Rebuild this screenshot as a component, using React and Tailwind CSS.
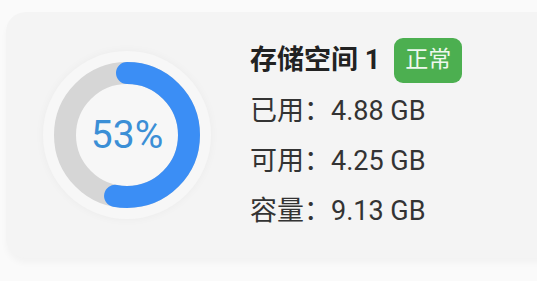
import React from "react";

const Ring = ({ percent }) => {
    const r = 62;
    const c = 2 * Math.PI * r;
    return (
        <div className="w-[168px] h-[168px] rounded-full bg-[#f7f7f7] shadow-[0_0_10px_rgba(0,0,0,0.04)] flex items-center justify-center relative">
            <svg width="168" height="168" viewBox="0 0 168 168" className="absolute inset-0">
                <circle cx="84" cy="84" r={r} fill="none" stroke="#d6d6d6" strokeWidth="22" />
                <circle
                    cx="84"
                    cy="84"
                    r={r}
                    fill="none"
                    stroke="#3b8ef5"
                    strokeWidth="22"
                    strokeLinecap="round"
                    strokeDasharray={`${(c * percent) / 100} ${c}`}
                    transform="rotate(-90 84 84)"
                />
            </svg>
            <span className="relative text-[39px] text-[#3b8fd6] font-[Roboto,sans-serif] leading-none">{percent}%</span>
        </div>
    );
};

const rows = [
    { label: "已用", value: "4.88 GB" },
    { label: "可用", value: "4.25 GB" },
    { label: "容量", value: "9.13 GB" },
];

const App = () => {
    return (
        <div className="w-[537px] h-[281px] bg-[#fafafa] overflow-hidden pt-[12px] pl-[6px] font-[Roboto,'Noto_Sans_CJK_SC',sans-serif]">
            <div className="w-[580px] h-[246px] bg-[#f4f4f4] rounded-[20px] shadow-[0_5px_6px_rgba(0,0,0,0.03)] flex items-center pl-[37px]">
                <Ring percent={53} />
                <div className="ml-[39px] flex flex-col">
                    <div className="h-[52px] flex items-center">
                        <span className="text-[27px] font-bold text-[#222]">存储空间 1</span>
                        <span className="ml-[14px] h-[45px] w-[68px] rounded-[9px] bg-[#4caf50] text-[#eef8ee] text-[23px] flex items-center justify-center">正常</span>
                    </div>
                    {rows.map((row) => (
                        <div key={row.label} className="text-[27px] leading-[50px] text-[#333]">
                            {row.label}：{row.value}
                        </div>
                    ))}
                </div>
            </div>
        </div>
    );
};

export default App;
